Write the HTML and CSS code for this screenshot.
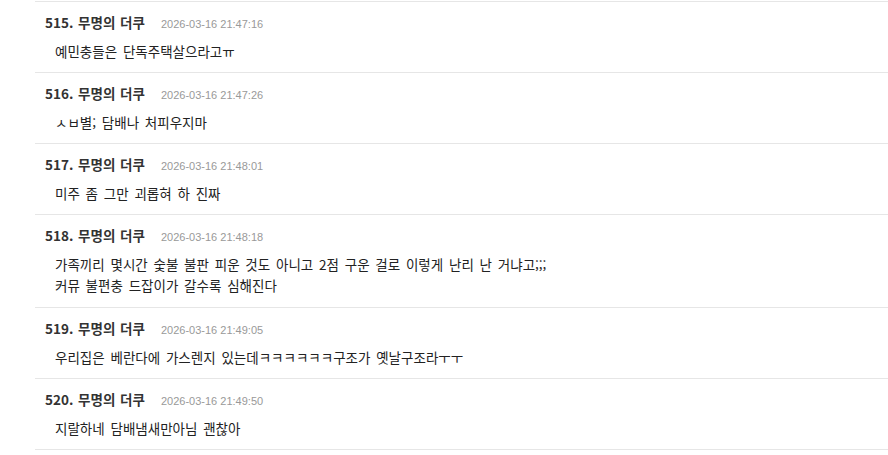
FILE: index.html
```html
<!DOCTYPE html>
<html lang="ko">
<head>
<meta charset="utf-8">
<link rel="stylesheet" href="styles.css">
</head>
<body>
<ul class="comments">
  <li class="comment">
    <div class="head"><span class="name">515. 무명의 더쿠</span><span class="date">2026-03-16 21:47:16</span></div>
    <div class="body">예민충들은 단독주택살으라고ㅠ</div>
  </li>
  <li class="comment">
    <div class="head"><span class="name">516. 무명의 더쿠</span><span class="date">2026-03-16 21:47:26</span></div>
    <div class="body">ㅅㅂ별; 담배나 처피우지마</div>
  </li>
  <li class="comment">
    <div class="head"><span class="name">517. 무명의 더쿠</span><span class="date">2026-03-16 21:48:01</span></div>
    <div class="body">미주 좀 그만 괴롭혀 하 진짜</div>
  </li>
  <li class="comment">
    <div class="head"><span class="name">518. 무명의 더쿠</span><span class="date">2026-03-16 21:48:18</span></div>
    <div class="body">가족끼리 몇시간 숯불 불판 피운 것도 아니고 2점 구운 걸로 이렇게 난리 난 거냐고;;;<br>커뮤 불편충 드잡이가 갈수록 심해진다</div>
  </li>
  <li class="comment">
    <div class="head"><span class="name">519. 무명의 더쿠</span><span class="date">2026-03-16 21:49:05</span></div>
    <div class="body">우리집은 베란다에 가스렌지 있는데ㅋㅋㅋㅋㅋㅋ구조가 옛날구조라ㅜㅜ</div>
  </li>
  <li class="comment">
    <div class="head"><span class="name">520. 무명의 더쿠</span><span class="date">2026-03-16 21:49:50</span></div>
    <div class="body">지랄하네 담배냄새만아님 괜찮아</div>
  </li>
</ul>
</body>
</html>
```
FILE: styles.css
```css
html, body {
  margin: 0;
  padding: 0;
  background: #fff;
}
body {
  padding-top: 1px;
  font-family: "Noto Sans CJK KR", "Noto Sans", sans-serif;
  color: #333;
  overflow: hidden;
}
.comments {
  list-style: none;
  margin: 0 0 0 35px;
  padding: 0;
}
.comment {
  border-top: 1px solid #e6e6e6;
  padding: 11px 0 10.1667px 10px;
}
.comment:last-child {
  border-bottom: 1px solid #e6e6e6;
}
.head {
  display: flex;
  align-items: baseline;
  gap: 16px;
  height: 18px;
  line-height: 18px;
  margin-bottom: 10px;
}
.name {
  font-size: 13.5px;
  font-weight: 700;
  word-spacing: 1px;
  color: #333;
}
.date {
  font-family: "Liberation Sans", Arial, sans-serif;
  font-size: 11px;
  color: #999;
}
.body {
  padding-left: 10px;
  font-size: 13.5px;
  word-spacing: 2px;
  line-height: 21px;
  color: #222;
}
```
